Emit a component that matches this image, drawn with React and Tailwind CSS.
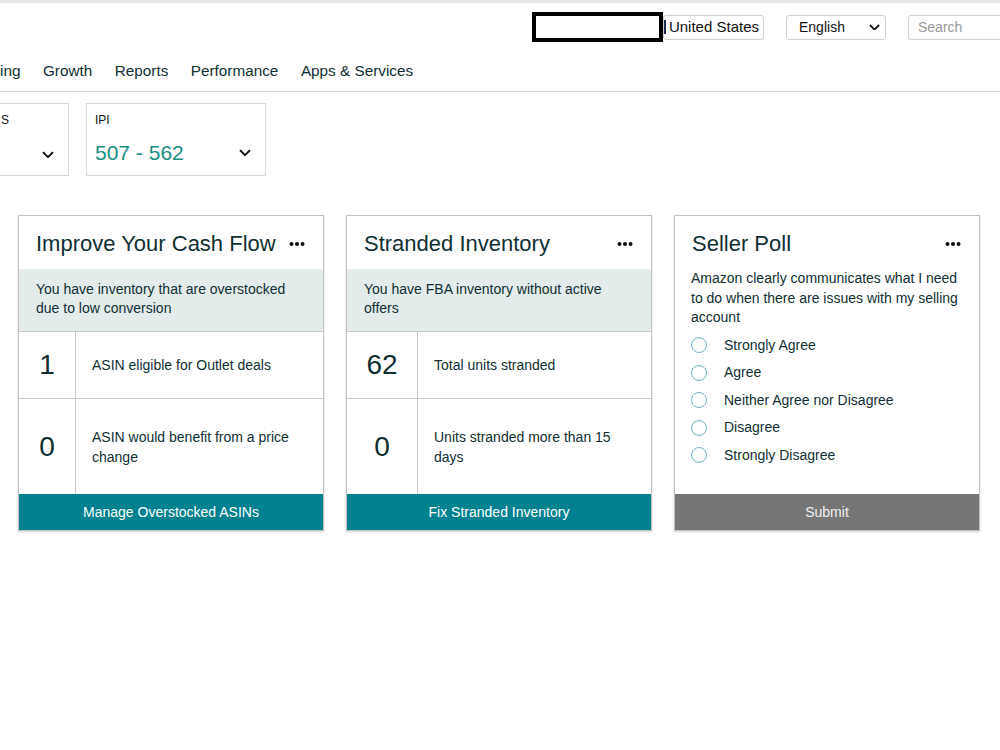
import React from "react";

const Dots = () => (
	<svg width="16" height="6" viewBox="0 0 16 6" className="shrink-0">
		<circle cx="2.5" cy="3" r="2" fill="#0f1111" />
		<circle cx="8" cy="3" r="2" fill="#0f1111" />
		<circle cx="13.5" cy="3" r="2" fill="#0f1111" />
	</svg>
);

const Chevron = ({ size = 12 }) => (
	<svg width={size} height={size * 0.6} viewBox="0 0 12 7" className="shrink-0">
		<polyline points="1,1 6,6 11,1" fill="none" stroke="#111" strokeWidth="2" />
	</svg>
);

const CardHeader = ({ title }) => (
	<div className="flex items-center justify-between h-[53px] pl-[17px] pr-[18px] pt-[3px]">
		<h2 className="text-[22px] text-[#0f2f33] leading-none">{title}</h2>
		<Dots />
	</div>
);

const StatRow = ({ value, label, tall, numW }) => (
	<div className={`flex border-t border-[#c9c9c9] ${tall ? "h-[96px]" : "h-[68px]"}`}>
		<div className={`${numW} shrink-0 border-r border-[#c9c9c9] flex items-center justify-center text-[28px] text-[#0f2f33]`}>
			{value}
		</div>
		<div className="flex items-center pl-[16px] pr-[28px] text-[14px] leading-[20px] text-[#0f2f33]">
			{label}
		</div>
	</div>
);

const StatCard = ({ title, info, rows, action, numW }) => (
	<div className="w-[306px] h-[316px] border border-[#c2c2c2] bg-white flex flex-col shadow-[0_1px_2px_rgba(0,0,0,0.18)]">
		<CardHeader title={title} />
		<div className="bg-[#e3ebeb] h-[62px] pl-[17px] pr-[20px] pt-[11px] text-[14px] leading-[19px] text-[#0f2f33]">
			{info}
		</div>
		<StatRow value={rows[0].value} label={rows[0].label} numW={numW} />
		<StatRow value={rows[1].value} label={rows[1].label} numW={numW} tall />
		<button className="mt-auto h-[36px] bg-[#00818f] text-white text-[14px]">
			{action}
		</button>
	</div>
);

const options = [
	"Strongly Agree",
	"Agree",
	"Neither Agree nor Disagree",
	"Disagree",
	"Strongly Disagree",
];

const PollCard = () => (
	<div className="w-[306px] h-[316px] border border-[#c2c2c2] bg-white flex flex-col shadow-[0_1px_2px_rgba(0,0,0,0.18)]">
		<CardHeader title="Seller Poll" />
		<p className="pl-[16px] pr-[12px] text-[14px] leading-[19.5px] text-[#0f2f33]">
			Amazon clearly communicates what I need to do when there are issues with my selling account
		</p>
		<div className="flex flex-col pl-[16px] pt-[4px]">
			{options.map((o) => (
				<label key={o} className="flex items-center h-[27.5px] text-[14px] text-[#0f2f33]">
					<span className="w-[16px] h-[16px] rounded-full border-[1.5px] border-[#6fb4c2] shrink-0" />
					<span className="ml-[17px]">{o}</span>
				</label>
			))}
		</div>
		<button className="mt-auto h-[36px] bg-[#767676] text-[#f2f2f2] text-[14px]">
			Submit
		</button>
	</div>
);

export default function App() {
	return (
		<div className="w-[1000px] h-[750px] overflow-hidden bg-white font-['Liberation_Sans',Arial,sans-serif]">
			<div className="h-[3px] bg-[#e6e6e6]" />

			<div className="flex items-center justify-end pt-[9px] h-[39px]">
				<div className="w-[131px] h-[30px] border-[4px] border-black bg-white" />
				<div className="flex items-center h-[25px] border border-[#d0d0d0] rounded-[3px] pr-[4px]">
					<span className="w-[2px] h-[14px] bg-[#1a2a4a] mr-[3px]" />
					<span className="text-[15px] text-[#111]">United States</span>
				</div>
				<div className="ml-[22px] w-[100px] h-[25px] border border-[#d0d0d0] rounded-[3px] flex items-center justify-between pl-[12px] pr-[5px] text-[14px] text-[#111]">
					English
					<Chevron size={11} />
				</div>
				<div className="ml-[22px] -mr-[20px] w-[112px] h-[25px] border border-[#d0d0d0] rounded-[3px] flex items-center pl-[9px] text-[14px] text-[#9a9a9a]">
					Search
				</div>
			</div>

			<nav className="flex items-center gap-[22.5px] h-[50px] pt-[9px] border-b border-[#d6d6d6] text-[15.3px] text-[#0f2f33]">
				<span>ing</span>
				<span>Growth</span>
				<span>Reports</span>
				<span>Performance</span>
				<span>Apps &amp; Services</span>
			</nav>

			<div className="flex gap-[17px] mt-[11px]">
				<div className="w-[81px] -ml-[12px] h-[73px] border border-[#d8d8d8] flex flex-col pl-[9px] pr-[14px] pt-[9px]">
					<span className="text-[12px] text-[#111] leading-[14px] ml-[3px]">S</span>
					<div className="flex items-center justify-end mt-auto mb-[17px]">
						<Chevron />
					</div>
				</div>
				<div className="w-[180px] h-[73px] border border-[#d8d8d8] flex flex-col pl-[8px] pr-[14px] pt-[9px]">
					<span className="text-[12px] text-[#111] leading-[14px]">IPI</span>
					<div className="flex items-center justify-between mt-[13px]">
						<span className="text-[21px] text-[#168f82] leading-[26px]">507 - 562</span>
						<Chevron />
					</div>
				</div>
			</div>

			<div className="flex gap-[22px] pl-[18px] mt-[39px]">
				<StatCard
					title="Improve Your Cash Flow"
					info="You have inventory that are overstocked due to low conversion"
					numW="w-[57px]"
					rows={[
						{ value: "1", label: "ASIN eligible for Outlet deals" },
						{ value: "0", label: "ASIN would benefit from a price change" },
					]}
					action="Manage Overstocked ASINs"
				/>
				<StatCard
					title="Stranded Inventory"
					info="You have FBA inventory without active offers"
					numW="w-[71px]"
					rows={[
						{ value: "62", label: "Total units stranded" },
						{ value: "0", label: "Units stranded more than 15 days" },
					]}
					action="Fix Stranded Inventory"
				/>
				<PollCard />
			</div>
		</div>
	);
}
